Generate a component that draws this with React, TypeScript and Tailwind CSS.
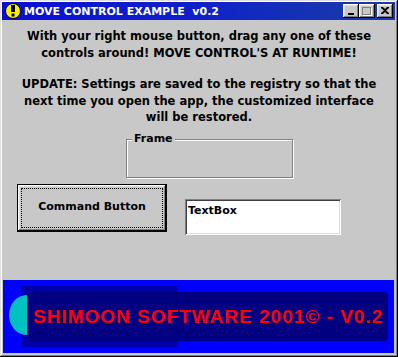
import React from "react";

const raised =
  "shadow-[inset_-1px_-1px_#000000,inset_1px_1px_#ffffff,inset_-2px_-2px_#808080,inset_2px_2px_#dfdfdf]";

function TitleButton({ children }: { children?: React.ReactNode }) {
  return (
    <div
      className={`w-[16px] h-[14px] bg-[#c8c8c8] flex items-center justify-center ${raised}`}
    >
      {children}
    </div>
  );
}

export default function App() {
  const font = { fontFamily: '"DejaVu Sans", Verdana, sans-serif' };
  return (
    <div
      className="w-[398px] h-[357px] bg-[#c8c8c8] flex flex-col shadow-[inset_-1px_-1px_#000000,inset_1px_1px_#dfdfdf,inset_-2px_-2px_#808080,inset_2px_2px_#ffffff] overflow-hidden"
      style={font}
    >
      {/* Title bar */}
      <div className="mt-[2px] ml-[2px] w-[393px] h-[18px] flex items-center bg-gradient-to-r from-[#0a0ad8] via-[#1020c8] to-[#1c3aa6] shrink-0">
        <div className="ml-[3px] w-[16px] h-[16px] rounded-full bg-[#f8f000] border border-black flex items-center justify-center">
          <svg width="6" height="12" viewBox="0 0 6 12">
            <rect x="1" y="0" width="4" height="7" fill="#000" />
            <rect x="1.5" y="8.5" width="3" height="3" fill="#000" />
          </svg>
        </div>
        <span className="ml-[3px] text-white font-bold text-[11px] leading-none whitespace-pre">
          MOVE CONTROL EXAMPLE  v0.2
        </span>
        <div className="ml-auto mr-[2px] flex items-center">
          <TitleButton>
            <div className="w-[6px] h-[2px] bg-black mt-[6px] ml-[-1px]" />
          </TitleButton>
          <TitleButton>
            <div className="w-[9px] h-[8px] border border-[#808080] shadow-[1px_1px_#ffffff] ml-[-1px] mt-[-1px]" />
          </TitleButton>
          <div className="w-[2px]" />
          <TitleButton>
            <svg width="8" height="7" viewBox="0 0 8 7" className="ml-[-1px] mt-[-1px]">
              <path d="M0 0h2l2 2 2-2h2v1L5 3.5 8 6v1H6L4 5 2 7H0V6l3-2.5L0 1z" fill="#000" />
            </svg>
          </TitleButton>
        </div>
      </div>

      {/* Body text */}
      <div className="mt-[8px] text-center text-[11.5px] font-bold leading-[16.5px] text-black">
        <p>With your right mouse button, drag any one of these</p>
        <p>controls around! MOVE CONTROL'S AT RUNTIME!</p>
      </div>
      <div className="mt-[15px] text-center text-[11.5px] font-bold leading-[16.5px] text-black">
        <p>UPDATE: Settings are saved to the registry so that the</p>
        <p>next time you open the app, the customized interface</p>
        <p>will be restored.</p>
      </div>

      {/* Frame */}
      <div className="mt-[13px] ml-[126px] w-[167px] h-[39px] relative border border-[#808080] shadow-[inset_1px_1px_#ffffff,1px_1px_#ffffff] shrink-0">
        <span className="absolute left-[5px] top-[-9px] px-[2px] bg-[#c8c8c8] text-[11px] font-bold leading-[16px] text-black">
          Frame
        </span>
      </div>

      {/* Controls row */}
      <div className="mt-[6px] flex items-start shrink-0">
        <div className="ml-[17px] w-[150px] h-[48px] border border-black bg-[#c8c8c8] relative">
          <div className={`w-full h-full p-[3px] ${raised}`}>
            <div className="w-full h-full border border-dotted border-black flex items-center justify-center text-[11px] font-bold text-black">
              Command Button
            </div>
          </div>
        </div>
        <div className="ml-[18px] mt-[15px] w-[156px] h-[36px] bg-white shadow-[inset_1px_1px_#808080,inset_-1px_-1px_#ffffff,inset_2px_2px_#404040,inset_-2px_-2px_#dfdfdf] pl-[3px] pt-[4px] text-[11px] font-bold leading-[16px] text-black">
          TextBox
        </div>
      </div>

      {/* Banner */}
      <div className="mt-auto mb-[4px] ml-[3px] w-[391px] h-[73px] bg-[#0000ff] grid shrink-0">
        <div className="col-start-1 row-start-1 ml-[18px] mt-[6px] w-[157px] h-[61px] bg-[#0000a8]" />
        <div className="col-start-1 row-start-1 ml-[6px] mt-[15px] w-[18px] h-[40px] bg-[#00c0c0] rounded-l-[18px_20px]" />
        <div
          className="col-start-1 row-start-1 ml-[24px] mt-[12px] w-[361px] h-[49px] bg-[#000080] rounded-[4px] flex items-center pl-[6px] text-[#ff0000] font-bold text-[19px] tracking-[1px] leading-none whitespace-nowrap"
          style={{ fontFamily: '"Liberation Sans", Arial, sans-serif' }}
        >
          SHIMOON SOFTWARE 2001© - V0.2
        </div>
      </div>
    </div>
  );
}
